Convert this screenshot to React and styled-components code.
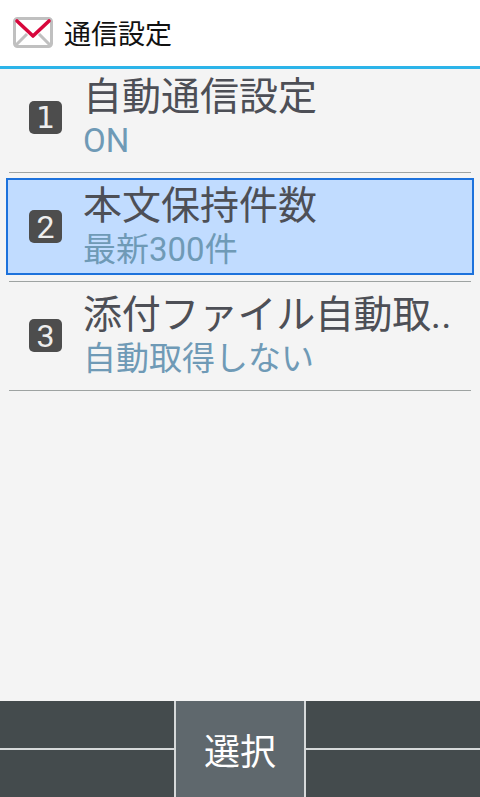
import React from "react";
import styled, { createGlobalStyle } from "styled-components";

const Global = createGlobalStyle`
  html, body { margin: 0; padding: 0; background: #f4f4f4; }
  body { font-family: "Roboto", "Noto Sans CJK JP", sans-serif; }
`;

const Screen = styled.div`
  width: 480px;
  height: 797px;
  display: flex;
  flex-direction: column;
  background: #f4f4f4;
  overflow: hidden;
`;

const Header = styled.header`
  height: 66px;
  flex: none;
  display: flex;
  align-items: center;
  gap: 10px;
  padding-left: 12px;
  background: #fff;
  border-bottom: 3px solid #2cb4e9;
`;

const HeaderTitle = styled.h1`
  margin: 0 0 2px;
  font-size: 27px;
  font-weight: 400;
  line-height: 1;
  color: #111;
  font-family: "Noto Sans CJK JP", sans-serif;
`;

const List = styled.main`
  flex: 1;
  display: flex;
  flex-direction: column;
`;

const Row = styled.div`
  padding: ${(p) => (p.$first ? "0" : "5px")} 0 6px;
  position: relative;
  &::after {
    content: "";
    display: block;
    height: 1px;
    margin: 6px 9px -6px;
    background: #9ea3a2;
  }
`;

const Cell = styled.div`
  height: 97px;
  box-sizing: border-box;
  margin: 0 6px;
  display: flex;
  align-items: center;
  gap: 22px;
  padding-left: 21px;
  border: 2px solid ${(p) => (p.$selected ? "#1d72dc" : "transparent")};
  background: ${(p) => (p.$selected ? "#c1dcff" : "transparent")};
`;

const Badge = styled.span`
  flex: none;
  width: 33px;
  height: 33px;
  border-radius: 5px;
  background: #4d4d4d;
  color: #eee;
  display: flex;
  align-items: center;
  justify-content: center;
  font-family: ${(p) => (p.$slab ? '"DejaVu Sans"' : '"Roboto"')}, sans-serif;
  font-size: ${(p) => (p.$slab ? "30px" : "32px")};
  line-height: 1;
`;

const Texts = styled.div`
  min-width: 0;
  margin-left: -1px;
  display: flex;
  flex-direction: column;
`;

const Title = styled.div`
  font-family: "Noto Sans CJK JP", sans-serif;
  font-size: 39px;
  line-height: 46px;
  height: 46px;
  color: #4d4f56;
  white-space: nowrap;
  letter-spacing: ${(p) => (p.$tight ? "-0.35px" : "0")};
`;

const Dots = styled.span`
  font-family: "Roboto", sans-serif;
  line-height: 0;
  letter-spacing: 0;
`;

const Sub = styled.div`
  font-family: "Roboto", "Noto Sans CJK JP", sans-serif;
  font-size: 33px;
  line-height: 49px;
  height: 49px;
  color: #6f9ab6;
  white-space: nowrap;
`;

const Footer = styled.footer`
  flex: none;
  height: 96px;
  display: grid;
  grid-template-columns: 174px 2px 128px 2px 174px;
  grid-template-rows: 47px 2px 47px;
  background: #d6d9da;
`;

const Soft = styled.div`
  background: #444b4d;
  grid-column: ${(p) => p.$col};
  grid-row: ${(p) => p.$row};
`;

const Action = styled.button`
  grid-column: 3;
  grid-row: 1 / 4;
  border: 0;
  padding: 0;
  background: #5f686d;
  color: #fff;
  font-family: "Noto Sans CJK JP", sans-serif;
  font-size: 36px;
`;

const Icon = styled.svg`
  flex: none;
  width: 42px;
  height: 34px;
`;

const MailIcon = () => (
  <Icon viewBox="0 0 42 34">
    <rect x="2.5" y="2.5" width="37" height="28" rx="3" fill="#fff" stroke="#c0c0c0" strokeWidth="3" />
    <path d="M3 30 L15 18 M39 30 L27 18" stroke="#c0c0c0" strokeWidth="3" fill="none" />
    <path d="M5 5 L21 20 L37 5" stroke="#d8073c" strokeWidth="3.6" fill="none" strokeLinecap="round" strokeLinejoin="round" />
  </Icon>
);

const items = [
  { n: 1, title: "自動通信設定", sub: "ON" },
  { n: 2, title: "本文保持件数", sub: "最新300件", selected: true },
  { n: 3, title: "添付ファイル自動取", more: true, sub: "自動取得しない" },
];

export default function App() {
  return (
    <Screen>
      <Global />
      <Header>
        <MailIcon />
        <HeaderTitle>通信設定</HeaderTitle>
      </Header>
      <List>
        {items.map((it, i) => (
          <Row key={it.n} $first={i === 0}>
            <Cell $selected={it.selected}>
              <Badge $slab={it.n === 1}>{it.n}</Badge>
              <Texts>
                <Title $tight={it.more}>
                  {it.title}
                  {it.more && <Dots>..</Dots>}
                </Title>
                <Sub>{it.sub}</Sub>
              </Texts>
            </Cell>
          </Row>
        ))}
      </List>
      <Footer>
        <Soft $col={1} $row={1} />
        <Soft $col={1} $row={3} />
        <Action>選択</Action>
        <Soft $col={5} $row={1} />
        <Soft $col={5} $row={3} />
      </Footer>
    </Screen>
  );
}
